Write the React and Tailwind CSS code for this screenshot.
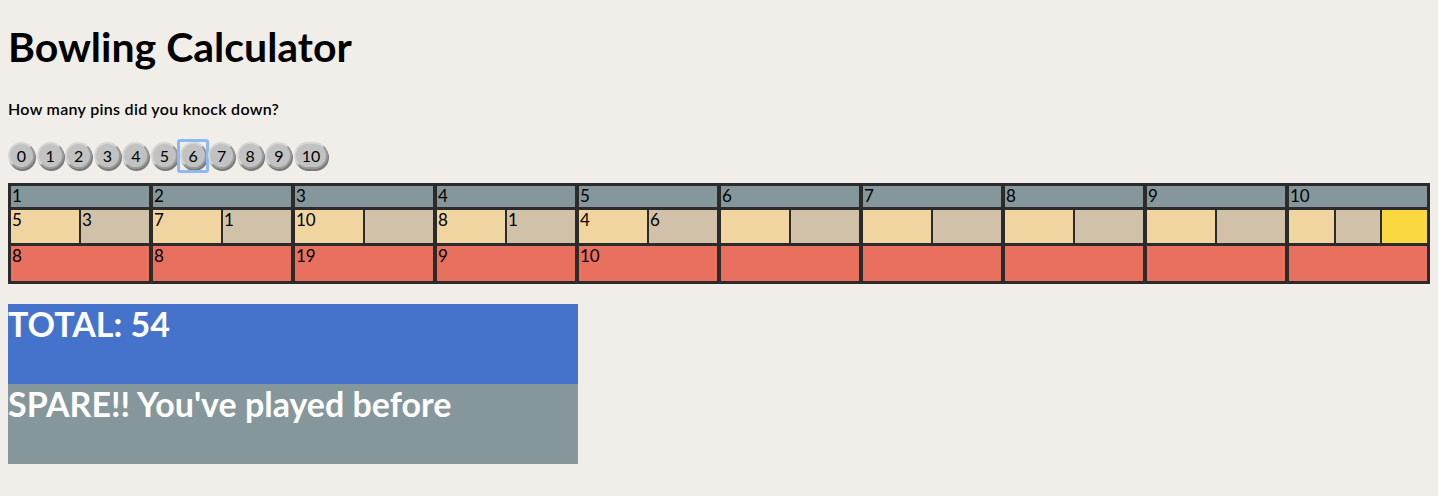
import React, { useState } from 'react';

const frames = [
  { rolls: ['5', '3'], score: '8' },
  { rolls: ['7', '1'], score: '8' },
  { rolls: ['10', ''], score: '19' },
  { rolls: ['8', '1'], score: '9' },
  { rolls: ['4', '6'], score: '10' },
  { rolls: ['', ''], score: '' },
  { rolls: ['', ''], score: '' },
  { rolls: ['', ''], score: '' },
  { rolls: ['', ''], score: '' },
  { rolls: ['', '', ''], score: '' },
];

const rollColors = ['bg-[#f0d5a0]', 'bg-[#d1c1a9]', 'bg-[#f9d93f]'];

function PinButton({ n, focused, onClick }) {
  return (
    <button
      onClick={onClick}
      className={`relative h-[27px] ${n === 10 ? 'w-[34px]' : 'w-[27px]'} rounded-full bg-[#c2c2c2] border-2 border-[#9a9a9a] border-t-[#d6d6d6] border-l-[#d6d6d6] shadow-[1px_2px_0_#7a7a7a] text-[16px] leading-none text-black flex items-center justify-center`}
    >
      {n}
      {focused && (
        <span className="absolute -left-[5px] -top-[5px] w-[32px] h-[34px] border-[3px] border-[#8cbaf2] rounded-[3px]" />
      )}
    </button>
  );
}

export default function App() {
  const [picked, setPicked] = useState(6);

  return (
    <div className="min-h-[496px] bg-[#f1eee9] px-2 pt-[22px] pb-8 font-['Lato',sans-serif] text-black">
      <h1 className="text-[41px] font-bold leading-[50px]">Bowling Calculator</h1>
      <p className="mt-[28px] text-[16px] font-semibold leading-[18px] tracking-[0.3px]">How many pins did you knock down?</p>

      <div className="mt-[24px] flex gap-[1.6px]">
        {[0, 1, 2, 3, 4, 5, 6, 7, 8, 9, 10].map((n) => (
          <PinButton key={n} n={n} focused={n === picked} onClick={() => setPicked(n)} />
        ))}
      </div>

      <div className="mt-[14px] bg-[#2b2b2b] p-[3px] grid grid-cols-10 gap-x-[4px] gap-y-[3px] text-[17px] leading-[20px]">
        {frames.map((f, i) => (
          <div key={`h${i}`} className="h-[21px] bg-[#85979b] pl-[1px]">{i + 1}</div>
        ))}
        {frames.map((f, i) => (
          <div key={`p${i}`} className="h-[33px] flex gap-[2px]">
            {f.rolls.map((r, j) => (
              <div key={j} className={`flex-1 ${rollColors[j]} pl-[1px]`}>{r}</div>
            ))}
          </div>
        ))}
        {frames.map((f, i) => (
          <div key={`s${i}`} className="h-[35px] bg-[#e9705f] pl-[1px]">{f.score}</div>
        ))}
      </div>

      <div className="mt-[20px] w-[570px]">
        <div className="h-[80px] bg-[#4573cc] text-white text-[34px] font-bold leading-[40px]">TOTAL: 54</div>
        <div className="h-[80px] bg-[#86979b] text-white text-[34px] font-bold leading-[40px]">SPARE!! You've played before</div>
      </div>
    </div>
  );
}
